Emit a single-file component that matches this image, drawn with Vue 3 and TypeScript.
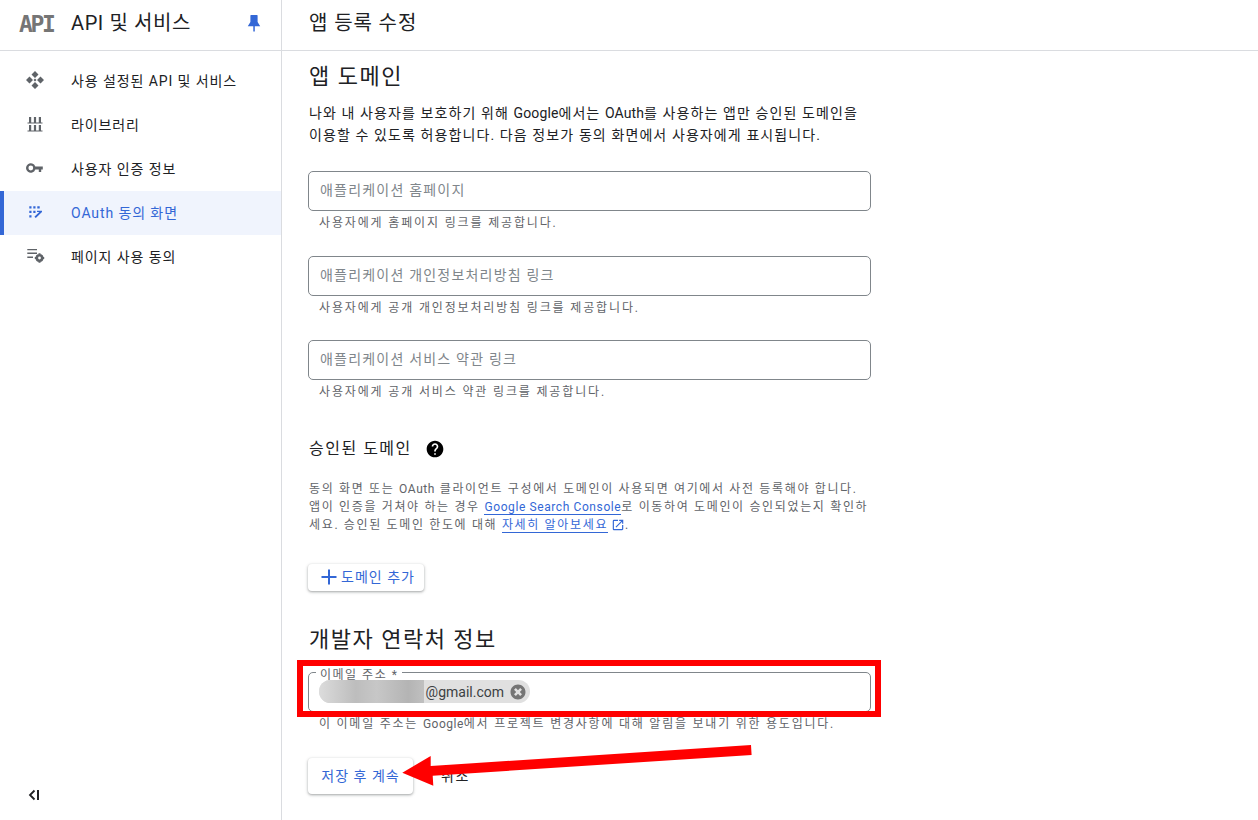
<script setup lang="ts">
const nav = [
  { label: '사용 설정된 API 및 서비스', icon: 'api' },
  { label: '라이브러리', icon: 'lib' },
  { label: '사용자 인증 정보', icon: 'key' },
  { label: 'OAuth 동의 화면', icon: 'oauth', active: true },
  { label: '페이지 사용 동의', icon: 'terms' },
]
const fields = [
  { ph: '애플리케이션 홈페이지', help: '사용자에게 홈페이지 링크를 제공합니다.' },
  { ph: '애플리케이션 개인정보처리방침 링크', help: '사용자에게 공개 개인정보처리방침 링크를 제공합니다.' },
  { ph: '애플리케이션 서비스 약관 링크', help: '사용자에게 공개 서비스 약관 링크를 제공합니다.' },
]
</script>

<template>
  <div class="page">
    <aside class="side">
      <div class="brand">
        <span class="logo">API</span>
        <span class="brand-title">API 및 서비스</span>
        <svg class="pin" width="24" height="24" viewBox="0 0 24 24"><path fill="#3367d6" d="M9 4h6a.6.6 0 0 1 .6.6V11l2.600 4.300H5.800L8.400 11V4.600A.6.6 0 0 1 9 4zM11.300 15h1.500v5.600h-1.500z"/></svg>
      </div>
      <nav class="nav">
        <div v-for="n in nav" :key="n.label" class="nav-item" :class="{ active: n.active }">
          <svg class="nav-icon" width="24" height="24" viewBox="0 0 24 24">
            <path v-if="n.icon === 'api'" fill="#5f6368" d="M12 3l3.500 3.500L12 10 8.500 6.500zM12 14l3.500 3.500L12 21l-3.500-3.500zM6.500 8.500L10 12l-3.500 3.500L3 12zM17.500 8.500L21 12l-3.500 3.500L14 12zM12 10.500l1.500 1.500-1.500 1.500-1.500-1.500z"/>
            <path v-else-if="n.icon === 'lib'" fill="#5f6368" d="M6 5h2.200v5.500H6zM10.900 5h2.200v5.500h-2.200zM15.800 5H18v5.500h-2.200zM4.500 10.500h15v1.100h-15zM6 13h2.200v5.500H6zM10.900 13h2.200v5.500h-2.200zM15.800 13H18v5.500h-2.200zM4.500 18.500h15v1.100h-15z"/>
            <path v-else-if="n.icon === 'key'" fill="#5f6368" d="M12.650 10A6 6 0 1 0 12.650 14H17v3h3v-3h2v-4H12.650zM7 15a3 3 0 1 1 0-6 3 3 0 0 1 0 6z" transform="translate(2.200 2.400) scale(.8)"/>
            <path v-else-if="n.icon === 'oauth'" fill="#3367d6" d="M6.300 6.300h2.200v2.200H6.300zM10.300 6.300h2.200v2.200h-2.200zM14.300 6.300h2.400v2.200h-2.400zM6.300 10.700h2.200v2.200H6.300zM10.300 10.700h2.200v2.200h-2.200zM6.300 15.300h2.200v2.200H6.300zM14 10.700h5v1.200l-6.200 6.200-1.400-1.400 4.900-4.800H14z"/>
            <g v-else fill="#5f6368">
              <path d="M4.300 5H14v1.300H4.300zM4.300 8.600H14v1.300H4.300zM4.300 12.600H10v1.300H4.300z"/>
              <circle cx="16.500" cy="14" r="2.700" fill="none" stroke="#5f6368" stroke-width="2.600"/>
              <path d="M15.500 9.300h2v1.500h-2zM15.500 17.200h2v1.500h-2zM11.800 13h1.500v2h-1.500zM19.700 13h1.500v2h-1.500z"/>
            </g>
          </svg>
          <span class="nav-label">{{ n.label }}</span>
        </div>
      </nav>
      <svg class="collapse" width="24" height="24" viewBox="0 0 24 24"><path fill="none" stroke="#202124" stroke-width="1.800" d="M12.500 7.500L8 12l4.500 4.500"/><path fill="#202124" d="M15 7h2v10h-2z"/></svg>
    </aside>

    <div class="content">
      <header class="topbar">앱 등록 수정</header>
      <main class="main">
        <h2 class="h2 first">앱 도메인</h2>
        <p class="intro">나와 내 사용자를 보호하기 위해 <span class="la">Google</span>에서는 <span class="la">OAuth</span>를 사용하는 앱만 승인된 도메인을<br>이용할 수 있도록 허용합니다. 다음 정보가 동의 화면에서 사용자에게 표시됩니다.</p>

        <div class="fields">
          <div v-for="f in fields" :key="f.ph" class="field">
            <div class="box"><span class="ph">{{ f.ph }}</span></div>
            <div class="help">{{ f.help }}</div>
          </div>
        </div>

        <div class="h3-row">
          <h3 class="h3">승인된 도메인</h3>
          <svg width="20" height="20" viewBox="0 0 24 24"><path fill="#000" d="M12 2C6.480 2 2 6.480 2 12s4.480 10 10 10 10-4.480 10-10S17.520 2 12 2zm1 17h-2v-2h2v2zm2.070-7.750l-.9.920C13.450 12.900 13 13.500 13 15h-2v-.5c0-1.100.45-2.100 1.170-2.830l1.240-1.260c.37-.36.59-.86.590-1.410 0-1.100-.9-2-2-2s-2 .9-2 2H8c0-2.210 1.790-4 4-4s4 1.790 4 4c0 .88-.36 1.680-.93 2.250z"/></svg>
        </div>
        <p class="desc">동의 화면 또는 <span class="la">OAuth</span> 클라이언트 구성에서 도메인이 사용되면 여기에서 사전 등록해야 합니다.<br>앱이 인증을 거쳐야 하는 경우 <a class="link la">Google Search Console</a>로 이동하여 도메인이 승인되었는지 확인하<br>세요. 승인된 도메인 한도에 대해 <a class="link">자세히 알아보세요</a><svg class="ext" width="14" height="14" viewBox="0 0 24 24"><path fill="#3367d6" d="M19 19H5V5h7V3H5a2 2 0 0 0-2 2v14a2 2 0 0 0 2 2h14c1.100 0 2-.9 2-2v-7h-2v7zM14 3v2h3.590l-9.830 9.830 1.410 1.410L19 6.410V10h2V3h-7z"/></svg>.</p>

        <button class="btn add" type="button">
          <svg width="24" height="24" viewBox="0 0 24 24"><path fill="#3367d6" d="M19.500 13h-6.500v6.500h-2V13H4.500v-2H11V4.500h2V11h6.500v2z"/></svg>
          <span class="lift">도메인 추가</span>
        </button>

        <h2 class="h2 dev">개발자 연락처 정보</h2>
        <div class="field email">
          <div class="box filled">
            <span class="legend">이메일 주소 *</span>
            <span class="chip">
              <span class="blur"></span>
              <span class="chip-text">@gmail.com</span>
              <svg width="18" height="18" viewBox="0 0 24 24"><path fill="#757575" d="M12 2C6.470 2 2 6.470 2 12s4.470 10 10 10 10-4.470 10-10S17.530 2 12 2zm5.300 12.900L14.900 17.300 12 14.400l-2.900 2.900-2.400-2.400 2.900-2.900-2.900-2.900 2.400-2.400L12 9.600l2.900-2.900 2.400 2.400-2.900 2.900z"/></svg>
            </span>
          </div>
          <div class="help">이 이메일 주소는 <span class="la">Google</span>에서 프로젝트 변경사항에 대해 알림을 보내기 위한 용도입니다.</div>
        </div>

        <div class="actions">
          <button class="btn save" type="button"><span class="lift">저장 후 계속</span></button>
          <span class="cancel">취소</span>
        </div>
      </main>
    </div>

    <div class="mark"></div>
    <svg class="arrow" width="1258" height="820" viewBox="0 0 1258 820">
      <path fill="#f00" d="M751 745L751.600 755L432.700 775.700L433.300 785.700L402.300 772.700L430.700 756L430.700 766z"/>
    </svg>
  </div>
</template>

<style>
html, body { margin: 0; background: #fff; }
</style>

<style scoped>
.page {
  position: relative;
  display: flex;
  width: 1258px;
  height: 820px;
  overflow: hidden;
  background: #fff;
  color: #202124;
  font-family: Roboto, "Noto Sans CJK KR", sans-serif;
}
.side {
  position: relative;
  flex: none;
  width: 281px;
  border-right: 1px solid #dadce0;
  display: flex;
  flex-direction: column;
}
.brand {
  height: 46px;
  border-bottom: 1px solid #dadce0;
  display: flex;
  align-items: center;
  padding-left: 19px;
  padding-bottom: 4px;
}
.logo {
  width: 52px;
  padding-top: 2px;
  font-family: "DejaVu Sans Mono", monospace;
  font-weight: 700;
  font-size: 23px;
  letter-spacing: -2.400px;
  color: #757575;
}
.brand-title {
  flex: 1;
  font-size: 20px;
  letter-spacing: .6px;
  padding-bottom: 4px;
  color: #202124;
}
.pin { margin-right: 15px; }
.nav { padding-top: 8px; }
.nav-item {
  box-sizing: border-box;
  height: 44px;
  display: flex;
  align-items: center;
  padding: 0 0 2px 23px;
  font-size: 14px;
  letter-spacing: .9px;
}
.nav-icon { flex: none; margin-right: 24px; }
.nav-item.active {
  background: #f0f4fd;
  color: #3367d6;
  box-shadow: inset 4px 0 0 #3367d6;
}
.collapse { position: absolute; left: 22px; bottom: 13px; }
.content { flex: 1; display: flex; flex-direction: column; min-width: 0; }
.topbar {
  flex: none;
  height: 50px;
  border-bottom: 1px solid #dadce0;
  line-height: 46px;
  padding-left: 27px;
  font-size: 20px;
  letter-spacing: .9px;
}
.main { padding-left: 26px; flex: 1; }
.h2 { margin: 0; font-weight: 400; font-size: 22px; line-height: 32px; letter-spacing: 1.500px; padding-left: 1px; }
.h2.first { margin-top: 10px; }
.intro { margin: 9px 0 0; font-size: 14px; line-height: 22px; color: #202124; letter-spacing: 1.100px; padding-left: 1px; }
.la { letter-spacing: .1px; }
.fields { margin-top: 25px; display: flex; flex-direction: column; }
.field { width: 563px; }
.fields .field { height: 84.500px; }
.box {
  box-sizing: border-box;
  position: relative;
  height: 40px;
  border: 1px solid #80868b;
  border-radius: 5px;
  display: flex;
  align-items: center;
  padding: 0 0 4px 11px;
}
.ph { font-size: 14px; color: #80868b; letter-spacing: 1.200px; }
.help { padding: 4px 0 0 11px; font-size: 12px; line-height: 16px; color: #5f6368; letter-spacing: 1.850px; white-space: nowrap; }
.help .la { letter-spacing: .5px; }
.email .help { letter-spacing: 1.770px; }
.h3-row { display: flex; align-items: center; gap: 13px; margin-top: 12px; height: 24px; padding-left: 1px; }
.h3 { margin: 0; font-size: 16px; font-weight: 400; line-height: 24px; letter-spacing: 1.500px; }
.desc { margin: 19px 0 0; padding-left: 1px; width: 570px; font-size: 12px; line-height: 18px; color: #5f6368; letter-spacing: 1.650px; white-space: nowrap; }
.desc .la { letter-spacing: .6px; }
.link { color: #3367d6; border-bottom: 1px solid #3367d6; }
.ext { vertical-align: -3px; margin-left: 3px; }
.btn {
  border: 0;
  border-radius: 4px;
  background: #fff;
  font: inherit;
  font-size: 14px;
  color: #3367d6;
  box-shadow: 0 1px 2px rgba(60,64,67,.3), 0 1px 3px 1px rgba(60,64,67,.15);
  padding: 0;
  display: flex;
  align-items: center;
  justify-content: center;
}
.add { margin-top: 30px; width: 116px; height: 27px; letter-spacing: 1px; }
.h2.dev { margin-top: 33px; }
.email { margin-top: 16px; }
.filled { padding: 0 0 0 10px; }
.legend {
  position: absolute;
  left: 7px;
  top: -5px;
  padding: 0 4px;
  background: #fff;
  font-size: 12px;
  line-height: 14px;
  color: #5f6368;
  letter-spacing: 1.500px;
}
.chip {
  position: relative;
  height: 23px;
  width: 211px;
  border-radius: 12px;
  background: #e0e0e0;
  display: flex;
  align-items: center;
  justify-content: flex-end;
  font-size: 14px;
  gap: 5px;
  padding-right: 3px;
  box-sizing: border-box;
  overflow: hidden;
}
.blur {
  position: absolute;
  left: 0;
  top: 0;
  width: 105px;
  height: 26px;
  background: linear-gradient(90deg, #dcdcdc 0%, #bdbdbd 35%, #c7c7c7 55%, #b4b4b4 85%, #c0c0c0 100%);
}
.chip-text { color: #3c4043; }
.actions { margin-top: 26px; display: flex; align-items: center; }
.save { width: 105px; height: 36px; letter-spacing: 1px; }
.lift { padding-bottom: 2px; }
.cancel { margin-left: 28px; font-size: 14px; color: #202124; letter-spacing: 1.500px; padding-bottom: 2px; }
.mark {
  position: absolute;
  left: 297px;
  top: 660px;
  width: 584px;
  height: 57px;
  box-sizing: border-box;
  border: 6px solid #f00;
}
.arrow { position: absolute; left: 0; top: 0; pointer-events: none; }
</style>
